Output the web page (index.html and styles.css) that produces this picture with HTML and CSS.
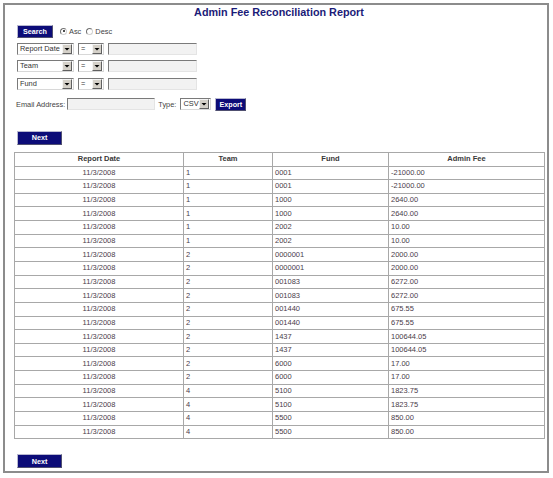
FILE: index.html
```html
<!DOCTYPE html>
<html>
<head>
<meta charset="utf-8">
<title>Admin Fee Reconciliation Report</title>
<link rel="stylesheet" href="styles.css">
</head>
<body>
<div class="page">
  <h1 class="title">Admin Fee Reconciliation Report</h1>
  <div class="controls">
    <div class="row search-row">
      <button class="btn btn-search">Search</button>
      <label class="radio"><span class="dot on"></span>Asc</label>
      <label class="radio"><span class="dot"></span>Desc</label>
    </div>
    <div class="row filter">
      <span class="sel w-field"><span class="sel-text">Report Date</span><span class="arrow"><svg viewBox="0 0 8 8" width="8" height="8"><polygon points="1.5,3 6.5,3 4,5.5" fill="#000"/></svg></span></span>
      <span class="sel w-op"><span class="sel-text">=</span><span class="arrow"><svg viewBox="0 0 8 8" width="8" height="8"><polygon points="1.5,3 6.5,3 4,5.5" fill="#000"/></svg></span></span>
      <input type="text" class="txt w-val">
    </div>
    <div class="row filter">
      <span class="sel w-field"><span class="sel-text">Team</span><span class="arrow"><svg viewBox="0 0 8 8" width="8" height="8"><polygon points="1.5,3 6.5,3 4,5.5" fill="#000"/></svg></span></span>
      <span class="sel w-op"><span class="sel-text">=</span><span class="arrow"><svg viewBox="0 0 8 8" width="8" height="8"><polygon points="1.5,3 6.5,3 4,5.5" fill="#000"/></svg></span></span>
      <input type="text" class="txt w-val">
    </div>
    <div class="row filter">
      <span class="sel w-field"><span class="sel-text">Fund</span><span class="arrow"><svg viewBox="0 0 8 8" width="8" height="8"><polygon points="1.5,3 6.5,3 4,5.5" fill="#000"/></svg></span></span>
      <span class="sel w-op"><span class="sel-text">=</span><span class="arrow"><svg viewBox="0 0 8 8" width="8" height="8"><polygon points="1.5,3 6.5,3 4,5.5" fill="#000"/></svg></span></span>
      <input type="text" class="txt w-val">
    </div>
    <div class="row email-row">
      <span class="lbl lbl-email">Email Address:</span>
      <input type="text" class="txt w-email">
      <span class="lbl lbl-type">Type:</span>
      <span class="sel w-type"><span class="sel-text">CSV</span><span class="arrow"><svg viewBox="0 0 8 8" width="8" height="8"><polygon points="1.5,3 6.5,3 4,5.5" fill="#000"/></svg></span></span>
      <button class="btn btn-export">Export</button>
    </div>
  </div>
  <div class="pager pager-top"><button class="btn btn-next">Next</button></div>
  <table class="grid">
    <colgroup><col class="c1"><col class="c2"><col class="c3"><col class="c4"></colgroup>
    <thead>
      <tr><th>Report Date</th><th>Team</th><th>Fund</th><th>Admin Fee</th></tr>
    </thead>
    <tbody>
      <tr><td class="date">11/3/2008</td><td>1</td><td>0001</td><td>-21000.00</td></tr>
      <tr><td class="date">11/3/2008</td><td>1</td><td>0001</td><td>-21000.00</td></tr>
      <tr><td class="date">11/3/2008</td><td>1</td><td>1000</td><td>2640.00</td></tr>
      <tr><td class="date">11/3/2008</td><td>1</td><td>1000</td><td>2640.00</td></tr>
      <tr><td class="date">11/3/2008</td><td>1</td><td>2002</td><td>10.00</td></tr>
      <tr><td class="date">11/3/2008</td><td>1</td><td>2002</td><td>10.00</td></tr>
      <tr><td class="date">11/3/2008</td><td>2</td><td>0000001</td><td>2000.00</td></tr>
      <tr><td class="date">11/3/2008</td><td>2</td><td>0000001</td><td>2000.00</td></tr>
      <tr><td class="date">11/3/2008</td><td>2</td><td>001083</td><td>6272.00</td></tr>
      <tr><td class="date">11/3/2008</td><td>2</td><td>001083</td><td>6272.00</td></tr>
      <tr><td class="date">11/3/2008</td><td>2</td><td>001440</td><td>675.55</td></tr>
      <tr><td class="date">11/3/2008</td><td>2</td><td>001440</td><td>675.55</td></tr>
      <tr><td class="date">11/3/2008</td><td>2</td><td>1437</td><td>100644.05</td></tr>
      <tr><td class="date">11/3/2008</td><td>2</td><td>1437</td><td>100644.05</td></tr>
      <tr><td class="date">11/3/2008</td><td>2</td><td>6000</td><td>17.00</td></tr>
      <tr><td class="date">11/3/2008</td><td>2</td><td>6000</td><td>17.00</td></tr>
      <tr><td class="date">11/3/2008</td><td>4</td><td>5100</td><td>1823.75</td></tr>
      <tr><td class="date">11/3/2008</td><td>4</td><td>5100</td><td>1823.75</td></tr>
      <tr><td class="date">11/3/2008</td><td>4</td><td>5500</td><td>850.00</td></tr>
      <tr><td class="date">11/3/2008</td><td>4</td><td>5500</td><td>850.00</td></tr>
    </tbody>
  </table>
  <div class="pager pager-bottom"><button class="btn btn-next">Next</button></div>
</div>
</body>
</html>
```
FILE: styles.css
```css
html, body {
  margin: 0;
  padding: 0;
  background: #ffffff;
}
body {
  font-family: "Liberation Sans", Arial, sans-serif;
  color: #333333;
}
.page {
  box-sizing: border-box;
  margin: 3px;
  width: 546px;
  height: 470px;
  border: 2px solid #8c8c8c;
  background: #ffffff;
}
.title {
  margin: 0;
  padding-left: 6px;
  height: 14px;
  line-height: 14px;
  text-align: center;
  font-size: 10.8px;
  font-weight: bold;
  color: #1b1b78;
}
.controls {
  padding-left: 12px;
}
.row {
  display: flex;
  align-items: center;
  font-size: 7.4px;
}
.search-row {
  margin-top: 6px;
  height: 12px;
}
.filter {
  margin-top: 5.5px;
  height: 12px;
}
.filter:first-of-type {
  margin-top: 4px;
}
.email-row {
  margin-top: 8px;
  height: 13px;
  margin-left: -1px;
}
.btn {
  box-sizing: border-box;
  margin: 0;
  padding: 0;
  background: #0c0c78;
  color: #ffffff;
  font-family: "Liberation Sans", Arial, sans-serif;
  font-size: 7.2px;
  font-weight: bold;
  border: 1px solid;
  border-color: #b8b8d0 #505070 #505070 #b8b8d0;
  text-align: center;
}
.btn-search {
  width: 36px;
  height: 13px;
}
.btn-export {
  width: 31px;
  height: 13px;
  margin-left: 4px;
}
.btn-next {
  width: 45px;
  height: 14px;
}
.radio {
  display: inline-flex;
  align-items: center;
  color: #444444;
  font-size: 7.4px;
}
.radio:first-of-type {
  margin-left: 7px;
}
.radio + .radio {
  margin-left: 5px;
}
.dot {
  box-sizing: border-box;
  display: inline-block;
  width: 7px;
  height: 7px;
  border-radius: 50%;
  border: 1px solid;
  border-color: #707070 #d0d0d0 #d0d0d0 #707070;
  background: #ffffff;
  margin-right: 2px;
  position: relative;
}
.dot.on::after {
  content: "";
  position: absolute;
  left: 1.5px;
  top: 1.5px;
  width: 2px;
  height: 2px;
  border-radius: 50%;
  background: #111111;
}
.sel {
  box-sizing: border-box;
  display: inline-flex;
  align-items: stretch;
  height: 12px;
  border: 1px solid;
  border-color: #7a7a7a #d8d8d8 #d8d8d8 #7a7a7a;
  background: #ffffff;
}
.sel-text {
  flex: 1;
  padding-left: 2px;
  line-height: 10px;
  color: #333333;
  font-size: 7.4px;
  white-space: nowrap;
  overflow: hidden;
}
.arrow {
  box-sizing: border-box;
  width: 10px;
  margin: 0 1px 0 0;
  background: #d4d0c8;
  border: 1px solid;
  border-color: #f4f4f4 #606060 #606060 #f4f4f4;
  display: flex;
  align-items: center;
  justify-content: center;
}
.arrow svg {
  display: block;
}
.w-field {
  width: 57px;
}
.w-op {
  width: 26px;
  margin-left: 4px;
}
.w-type {
  width: 31px;
  margin-left: 4px;
}
.txt {
  box-sizing: border-box;
  margin: 0;
  padding: 0;
  height: 12px;
  background: #f2f2f2;
  border: 1px solid;
  border-color: #7a7a7a #e4e4e4 #e4e4e4 #7a7a7a;
}
.w-val {
  width: 89px;
  margin-left: 4px;
}
.w-email {
  width: 88px;
  margin-left: 2px;
}
.lbl {
  color: #444444;
  font-size: 7.4px;
  white-space: nowrap;
}
.lbl-type {
  margin-left: 3px;
}
.pager {
  padding-left: 12px;
}
.pager-top {
  margin-top: 20px;
  height: 14px;
}
.pager-bottom {
  margin-top: 15px;
  height: 14px;
}
.pager .btn {
  display: block;
}
.grid {
  margin-top: 7px;
  margin-left: 9px;
  width: 530px;
  border-collapse: collapse;
  table-layout: fixed;
  font-size: 7.5px;
}
.grid .c1 { width: 169px; }
.grid .c2 { width: 89px; }
.grid .c3 { width: 116px; }
.grid .c4 { width: 156px; }
.grid th,
.grid td {
  border: 1px solid #a8a8a8;
  padding: 0 2px;
  white-space: nowrap;
  line-height: 8px;
}
.grid th {
  height: 13px;
  font-weight: bold;
  color: #383838;
  text-align: center;
}
.grid td {
  height: 12.65px;
  color: #4a3c4a;
  text-align: left;
}
.grid td.date {
  text-align: center;
}
```
